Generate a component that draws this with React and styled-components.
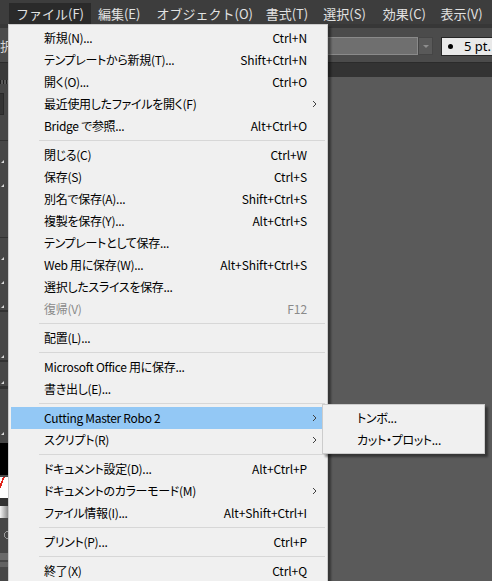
import React from "react";
import styled, { createGlobalStyle } from "styled-components";

const GlobalStyle = createGlobalStyle`
  html, body {
    margin: 0;
    height: 100%;
    overflow: hidden;
    background: #5a5a5a;
  }
  body {
    font-family: "Noto Sans CJK JP", "Noto Sans", sans-serif;
  }
`;

const Window = styled.div`
  position: relative;
  height: 581px;
  display: flex;
  flex-direction: column;
  overflow: hidden;
  background: #5a5a5a;
`;

/* ---------- top menu bar ---------- */

const MenuBar = styled.div`
  height: 24px;
  flex-shrink: 0;
  display: flex;
  padding-left: 9px;
  background: #3d3d3d;
`;

const MenuTitle = styled.div`
  width: ${(p) => p.$w}px;
  margin-top: 3px;
  padding-left: 7px;
  box-sizing: border-box;
  display: flex;
  align-items: center;
  font-size: 13px;
  color: #e2e2e2;
  white-space: nowrap;
  background: ${(p) => (p.$open ? "#2a2a2a" : "transparent")};
`;

/* ---------- control bar ---------- */

const ControlBar = styled.div`
  height: 34px;
  flex-shrink: 0;
  display: flex;
  align-items: center;
  overflow: hidden;
  border-top: 4px solid #373737;
  border-bottom: 1px solid #2b2b2b;
  background: #4b4b4b;
`;

const BarLabel = styled.span`
  flex-shrink: 0;
  width: 16px;
  font-size: 13px;
  color: #d8d8d8;
  white-space: nowrap;
`;

const StyleField = styled.div`
  flex: 1;
  height: 18px;
  margin-top: 2px;
  box-sizing: border-box;
  border: 1px solid #8a8a8a;
  background: #6f6f6f;
`;

const DropButton = styled.div`
  flex-shrink: 0;
  width: 15px;
  height: 18px;
  margin-top: 2px;
  box-sizing: border-box;
  display: flex;
  align-items: center;
  justify-content: center;
  border: 1px solid #454545;
  background: #595959;

  &::after {
    content: "";
    border-left: 3px solid transparent;
    border-right: 3px solid transparent;
    border-top: 3px solid #8e8e8e;
  }
`;

const StrokeField = styled.div`
  flex-shrink: 0;
  width: 51px;
  height: 19px;
  margin-left: 8px;
  margin-top: 2px;
  box-sizing: border-box;
  display: flex;
  align-items: center;
  gap: 11px;
  padding-left: 6px;
  border: 1px solid #262626;
  border-right: none;
  background: #e9e9e9;
  font-family: "Noto Sans", sans-serif;
  font-size: 13px;
  color: #000;
  white-space: nowrap;
`;

const Dot = styled.span`
  width: 5px;
  height: 5px;
  border-radius: 50%;
  background: #000;
  flex-shrink: 0;
`;

/* ---------- tool strip and canvas ---------- */

const Body = styled.div`
  flex: 1;
  display: flex;
  min-height: 0;
`;

const ToolStrip = styled.div`
  width: 8px;
  flex-shrink: 0;
  display: flex;
  flex-direction: column;
  background: #474747;
`;

const ToolHead = styled.div`
  height: 17px;
  background: #393939;
`;

const Grip = styled.div`
  height: 4px;
  background: repeating-linear-gradient(90deg, #1f1f1f 0 1px, #5a5a5a 1px 3px);
`;

const Gap = styled.div`
  height: ${(p) => p.$h}px;
  flex-shrink: 0;
`;

const SelectedTool = styled.div`
  width: 4px;
  height: 22px;
  box-sizing: border-box;
  border: 1px solid #2a2a2a;
  border-left: none;
  background: #343434;
`;

const ToolDivider = styled.div`
  height: ${(p) => p.$h || 1}px;
  flex-shrink: 0;
  background: #323232;
`;

const ToolCell = styled.div`
  position: relative;
  height: 24px;
  flex-shrink: 0;

  &::after {
    content: "";
    display: ${(p) => (p.$corner ? "block" : "none")};
    position: absolute;
    left: 1px;
    bottom: 2px;
    border-left: 3px solid transparent;
    border-bottom: 3px solid #d8d8d8;
  }
`;

const Swatch = styled.div`
  height: ${(p) => p.$h}px;
  flex-shrink: 0;
  background: ${(p) => p.$bg};
`;

const Workspace = styled.div`
  flex: 1;
  display: flex;
  flex-direction: column;
`;

const TabStrip = styled.div`
  height: 14px;
  background: #333333;
`;

const Canvas = styled.div`
  flex: 1;
  background: #5a5a5a;
`;

/* ---------- drop-down menus ---------- */

const Dropdown = styled.div`
  position: absolute;
  left: ${(p) => p.$left};
  top: ${(p) => p.$top};
  width: ${(p) => p.$w}px;
  box-sizing: border-box;
  padding: 2px;
  border: 1px solid #cccccc;
  background: #f0f0f0;
  box-shadow: 3px 3px 2px rgba(0, 0, 0, 0.4);
  z-index: ${(p) => p.$z || 10};
`;

const Row = styled.div`
  position: relative;
  height: 22px;
  display: grid;
  grid-template-columns: 1fr auto 18px;
  align-items: center;
  padding-left: ${(p) => p.$indent}px;
  font-size: 12px;
  line-height: 16px;
  letter-spacing: -0.3px;
  font-feature-settings: "palt";
  white-space: nowrap;
  color: ${(p) => (p.$disabled ? "#8a8a8a" : "#000")};
  background: ${(p) => (p.$active ? "#93c8f5" : "transparent")};
`;

const Shortcut = styled.span`
  letter-spacing: -0.1px;
  font-feature-settings: normal;
`;

const Chevron = styled.svg`
  width: 5px;
  height: 8px;
  margin-left: 5px;
`;

const Separator = styled.div`
  height: 7px;
  margin-left: 28px;
  display: flex;
  align-items: center;

  &::after {
    content: "";
    flex: 1;
    height: 1px;
    background: #d7d7d7;
  }
`;

const titles = [
  { text: "ファイル(F)", w: 84, open: true },
  { text: "編集(E)", w: 60 },
  { text: "オブジェクト(O)", w: 112 },
  { text: "書式(T)", w: 59 },
  { text: "選択(S)", w: 61 },
  { text: "効果(C)", w: 59 },
  { text: "表示(V)", w: 60 },
];

const fileMenu = [
  { label: "新規(N)...", keys: "Ctrl+N" },
  { label: "テンプレートから新規(T)...", keys: "Shift+Ctrl+N" },
  { label: "開く(O)...", keys: "Ctrl+O" },
  { label: "最近使用したファイルを開く(F)", sub: true },
  { label: "Bridge で参照...", keys: "Alt+Ctrl+O" },
  null,
  { label: "閉じる(C)", keys: "Ctrl+W" },
  { label: "保存(S)", keys: "Ctrl+S" },
  { label: "別名で保存(A)...", keys: "Shift+Ctrl+S" },
  { label: "複製を保存(Y)...", keys: "Alt+Ctrl+S" },
  { label: "テンプレートとして保存..." },
  { label: "Web 用に保存(W)...", keys: "Alt+Shift+Ctrl+S" },
  { label: "選択したスライスを保存..." },
  { label: "復帰(V)", keys: "F12", disabled: true },
  null,
  { label: "配置(L)..." },
  null,
  { label: "Microsoft Office 用に保存..." },
  { label: "書き出し(E)..." },
  null,
  { label: "Cutting Master Robo 2", sub: true, active: true, children: ["トンボ...", "カット・プロット..."] },
  { label: "スクリプト(R)", sub: true },
  null,
  { label: "ドキュメント設定(D)...", keys: "Alt+Ctrl+P" },
  { label: "ドキュメントのカラーモード(M)", sub: true },
  { label: "ファイル情報(I)...", keys: "Alt+Shift+Ctrl+I" },
  null,
  { label: "プリント(P)...", keys: "Ctrl+P" },
  null,
  { label: "終了(X)", keys: "Ctrl+Q" },
];

const Arrow = () => (
  <Chevron viewBox="0 0 5 8">
    <path d="M1 1 L4 4 L1 7" fill="none" stroke="#404040" strokeWidth="1" />
  </Chevron>
);

const SubMenu = ({ items }) => (
  <Dropdown $left="calc(100% - 3px)" $top="-3px" $w={163} $z={20}>
    {items.map((label) => (
      <Row key={label} $indent={32}>
        <span>{label}</span>
      </Row>
    ))}
  </Dropdown>
);

const FileMenu = () => (
  <Dropdown $left="8px" $top="24px" $w={320}>
    {fileMenu.map((item, i) =>
      item === null ? (
        <Separator key={i} />
      ) : (
        <Row key={i} $indent={33} $active={item.active} $disabled={item.disabled}>
          <span>{item.label}</span>
          <Shortcut>{item.keys}</Shortcut>
          {item.sub ? <Arrow /> : <span />}
          {item.children && <SubMenu items={item.children} />}
        </Row>
      )
    )}
  </Dropdown>
);

const Tools = () => (
  <ToolStrip>
    <ToolHead />
    <Grip />
    <Gap $h={9} />
    <SelectedTool />
    <Gap $h={25} />
    <ToolDivider />
    <ToolCell $corner />
    <ToolCell $corner />
    <ToolCell />
    <ToolCell />
    <ToolDivider />
    <ToolCell $corner />
    <ToolCell $corner />
    <ToolCell $corner />
    <ToolDivider $h={2} />
    <ToolCell />
    <ToolCell $corner />
    <ToolDivider $h={2} />
    <ToolCell $corner />
    <ToolDivider $h={3} />
    <ToolCell />
    <ToolCell $corner />
    <Gap $h={6} />
    <Swatch $h={32} $bg="#000" />
    <Gap $h={2} />
    <Swatch $h={21} $bg="linear-gradient(to bottom right, #fff 0 18%, #e2231a 18% 30%, #fff 30%)" />
    <ToolDivider $h={8} />
    <Swatch $h={12} $bg="linear-gradient(90deg, #f4f4f4, #8a8a8a)" />
    <Gap $h={12} />
    <Swatch $h={10} $bg="radial-gradient(circle at 100% 50%, transparent 3px, #9a9a9a 3px 4px, transparent 4px)" />
    <Gap $h={13} />
    <Swatch $h={7} $bg="#6a6a6a" />
    <Gap $h={2} />
    <Swatch $h={5} $bg="#626262" />
  </ToolStrip>
);

export default function App() {
  return (
    <>
      <GlobalStyle />
      <Window>
        <MenuBar>
          {titles.map((t) => (
            <MenuTitle key={t.text} $w={t.w} $open={t.open}>
              {t.text}
            </MenuTitle>
          ))}
        </MenuBar>
        <ControlBar>
          <BarLabel>択</BarLabel>
          <StyleField />
          <DropButton />
          <StrokeField>
            <Dot />
            <span>5 pt.</span>
          </StrokeField>
        </ControlBar>
        <Body>
          <Tools />
          <Workspace>
            <TabStrip />
            <Canvas />
          </Workspace>
        </Body>
        <FileMenu />
      </Window>
    </>
  );
}
